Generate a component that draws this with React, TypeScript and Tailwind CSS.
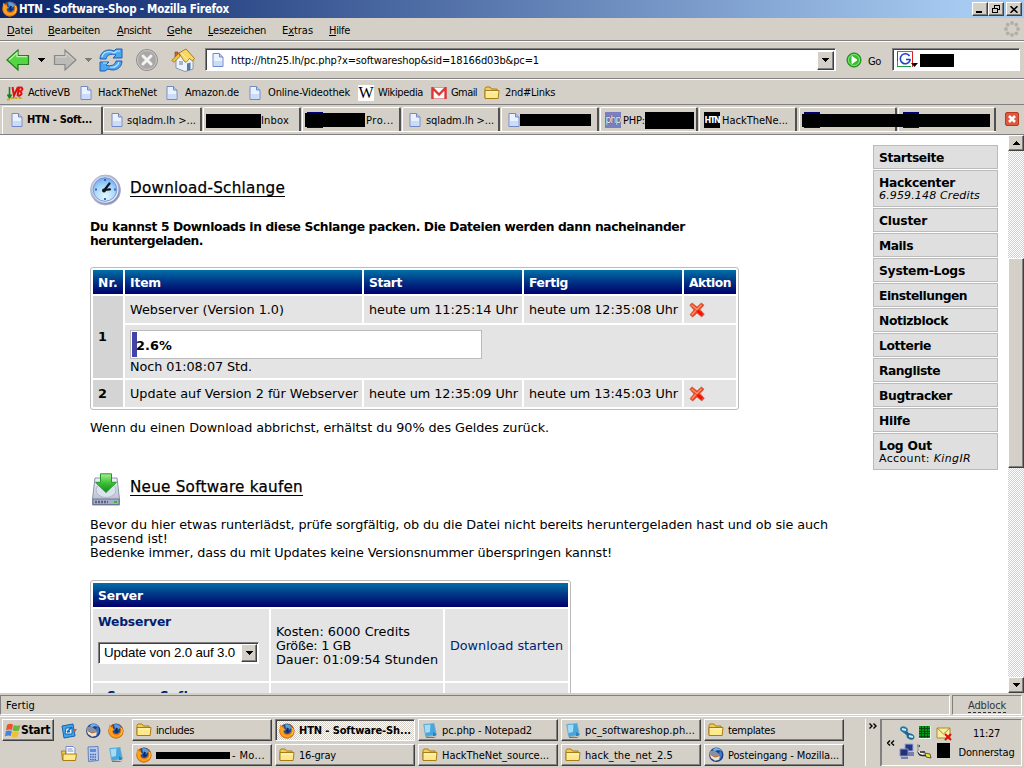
import { useLayoutEffect, useRef, type ReactNode } from "react";

/* Text set to a given advance width by spreading the letters evenly. */
function Fit({ w, line = false, className = "", children }: { w: number; line?: boolean; className?: string; children: ReactNode }) {
  const ref = useRef<HTMLSpanElement>(null);
  useLayoutEffect(() => {
    const el = ref.current;
    if (!el) return;
    el.style.letterSpacing = "0px";
    const natural = el.getBoundingClientRect().width;
    const count = (el.textContent || " ").length;
    el.style.letterSpacing = `${(w - natural) / count}px`;
  }, [w]);
  return (
    <span ref={ref} className={`${line ? "block w-max" : "inline-block"} shrink-0 whitespace-pre ${className}`}>
      {children}
    </span>
  );
}

const raised =
  "border border-t-white border-l-white border-r-[#404040] border-b-[#404040] bg-[#d4d0c8] shadow-[inset_-1px_-1px_#808080]";
const sunken =
  "border border-t-[#808080] border-l-[#808080] border-r-white border-b-white shadow-[inset_1px_1px_#404040]";
const checker = "bg-[repeating-conic-gradient(#ffffff_0%_25%,#d4d0c8_0%_50%)] bg-[length:2px_2px]";

function Firefox({ className = "size-4" }: { className?: string }) {
  return (
    <svg viewBox="0 0 16 16" className={`shrink-0 ${className}`}>
      <circle cx="8" cy="8" r="7.6" fill="#c8500c" />
      <circle cx="8" cy="7.2" r="6.4" fill="#1f4f9a" />
      <path d="M6 1.5c3-1 6 .3 7 3l-3 2-3-1z" fill="#5d9fd8" />
      <path d="M8 4.500l2 1-1 2 2 .5-2 2-2-1z" fill="#0d2a63" />
      <path d="M1.500 1.500L3 3.500l2-.6-.3 2L7 6.500 5 8c-.2 2 1.500 3.400 3.800 3 2.400-.4 3.600-2 3.600-4.200L11.600 3c3 1.600 4.200 4.600 3.200 7.500-1 3.200-4 5-7.200 4.900C3.500 15.200.5 12 .5 8c0-2.500.6-4.500 1-6.500z" fill="#e87a12" />
      <path d="M1.500 2L3 4.500l1.200 0L5.500 6.500 4 8c0 3 2.500 5 5.500 4.200 2.200-.6 4-2.400 4.200-5 1.200 4-1.800 7-5.700 7C4 14.200 1.200 11 1.200 7.500z" fill="#f9a51e" />
      <path d="M13.500 5c1 2 .8 5-1 7" stroke="#ffd94a" strokeWidth="1" fill="none" />
    </svg>
  );
}

function Thunderbird({ className = "size-4" }: { className?: string }) {
  return (
    <svg viewBox="0 0 16 16" className={`shrink-0 ${className}`}>
      <circle cx="8.300" cy="7.800" r="7.200" fill="#1d3f86" />
      <path d="M5 2c3-2 7-1 9 2-3-1-6-1-8 1z" fill="#6fb3ea" />
      <path d="M1 6c1-2 3-3 6-2l6 4-2 5-4 1-4-3z" fill="#8a8fa8" />
      <path d="M2 7l5 2.500L12.500 8l-1 4.500L7 13.500 3 11z" fill="#f0e3cc" />
      <path d="M2.500 7.500L7 10l5-1.500" stroke="#a5602a" fill="none" />
      <path d="M13 4c2 3 1 7-2 9 1-3 1-6 0-8z" fill="#3c7cc8" />
    </svg>
  );
}

function Page() {
  return (
    <svg viewBox="0 0 12 14" className="h-[14px] w-3 shrink-0">
      <path d="M1 .5h6.500l3.500 3.500v9.500H1z" fill="#eaf2ff" stroke="#7488c8" />
      <path d="M2 8h8v5H2z" fill="#c9dcfa" />
      <path d="M7.500.5V4H11" fill="#b8ccf2" stroke="#7488c8" />
    </svg>
  );
}

function Folder() {
  return (
    <svg viewBox="0 0 16 14" className="h-[14px] w-4 shrink-0">
      <path d="M1 2.500l1-1.500h4l1.500 2H13v2H4L2.500 12H1z" fill="#f2cf54" stroke="#a87d14" />
      <path d="M1 12.500V4.500h14l-.8 8z" fill="#ffe98c" stroke="#a87d14" />
      <path d="M2 6h12" stroke="#fff8d0" />
    </svg>
  );
}

function Notepad() {
  return (
    <svg viewBox="0 0 16 16" className="size-4 shrink-0">
      <path d="M4 14.500l9 .5 2-1-3 2H4z" fill="#777" />
      <path d="M1.500 2l10.500-1L14.500 13l-11 1.500z" fill="#49a6dc" stroke="#7fa8bd" strokeWidth=".6" />
      <path d="M2.500 3l6-.4L8 10l-4.500 1z" fill="#a4dcf8" />
      <path d="M1.500 1.500l10.500-1" stroke="#ddd" strokeWidth="1.500" strokeDasharray="1 1" />
      <path d="M11 10l3.500 2.500-1.500 1.500H11z" fill="#2a82bd" />
    </svg>
  );
}

function Down({ className = "" }: { className?: string }) {
  return (
    <svg viewBox="0 0 7 4" className={`h-1 w-[7px] ${className}`} shapeRendering="crispEdges">
      <path d="M0 0h7L3.500 4z" fill="#000" />
    </svg>
  );
}

function RedX() {
  return (
    <svg viewBox="0 0 16 16" className="mt-px size-4">
      <path d="M.8 3.200L3 .9 8 5l4.300-4 2.700 2.200-4 4.300 4.300 4.700-2.500 2.700L8 11l-4.300 4-2.700-2.300L5 8z" fill="#f2401c" stroke="#b9573d" strokeWidth=".7" />
      <path d="M2.500 3L8 7.500l4.500-4.800M2.800 13l4-4.500" stroke="#ff9064" strokeWidth="1.500" fill="none" />
      <path d="M8.500 8.800l4.500 4" stroke="#fb0b05" strokeWidth="2.500" />
    </svg>
  );
}

function TitleBar() {
  return (
    <div className="flex h-[18px] items-center bg-[linear-gradient(90deg,#0a246a,#a6caf0_94%)] pl-[2px] pr-[2px]">
      <Firefox />
      <Fit w={210} className="ml-px text-[11.500px] font-bold leading-[16px] text-white">HTN - Software-Shop - Mozilla Firefox</Fit>
      <div className="ml-auto flex">
        <div className={`flex h-[14px] w-4 items-end pb-[2px] pl-[3px] ${raised}`}><div className="h-[2px] w-[6px] bg-black" /></div>
        <div className={`flex h-[14px] w-4 items-center justify-center ${raised}`}>
          <svg viewBox="0 0 10 10" className="size-[10px]" shapeRendering="crispEdges" fill="none" stroke="#000">
            <path d="M3 1h6M3.500 1v3M8.500 1v5M7 5.500h2M1 4h6M1.500 4v5M6.500 4v5M1 8.500h6" /><path d="M3 1.500h6M1 4.500h6" />
          </svg>
        </div>
        <div className={`ml-[2px] flex h-[14px] w-4 items-center justify-center ${raised}`}>
          <svg viewBox="0 0 8 7" className="h-[7px] w-2" stroke="#000" strokeWidth="1.600"><path d="M.5.2l7 6.600M7.500.2l-7 6.600" /></svg>
        </div>
      </div>
    </div>
  );
}

const menus: [string, number, string, string, number][] = [
  ["", 26, "D", "atei", 15],
  ["", 52, "B", "earbeiten", 17],
  ["", 34, "A", "nsicht", 16],
  ["", 25, "G", "ehe", 16],
  ["", 58, "L", "esezeichen", 16],
  ["E", 31, "x", "tras", 16],
  ["", 21, "H", "ilfe", 0],
];

function Gap({ w }: { w: number }) {
  return <span className="shrink-0" style={{ width: w }} />;
}

function MenuBar() {
  return (
    <div className="flex h-6 items-start border-b border-b-white pl-[7px] pr-1 shadow-[inset_0_-1px_#808080]">
      {menus.map(([pre, w, u, post, gap]) => (
        <div key={u + post} className="flex shrink-0 pt-[6px]">
          <Fit w={w} className="leading-[14px]">{pre}<u>{u}</u>{post}</Fit>
          <Gap w={gap} />
        </div>
      ))}
      <svg viewBox="0 0 16 16" className="ml-auto mt-[3px] size-4" fill="#b2afaa">
        <circle cx="8" cy="2" r="1.900" /><circle cx="12.300" cy="3.700" r="1.900" /><circle cx="14" cy="8" r="1.900" /><circle cx="12.300" cy="12.300" r="1.900" />
        <circle cx="8" cy="14" r="1.900" /><circle cx="3.700" cy="12.300" r="1.900" /><circle cx="2" cy="8" r="1.900" /><circle cx="3.700" cy="3.700" r="1.900" />
      </svg>
    </div>
  );
}

function Toolbar() {
  return (
    <div className="flex h-[38px] items-center border-b border-b-white pb-[2px] shadow-[inset_0_-1px_#808080]">
      <svg viewBox="0 0 24 22" className="ml-[6px] h-[22px] w-6">
        <path d="M1 11L12 1v5.500h10.500v9H12V21z" fill="#56d544" stroke="#257d1f" strokeWidth="1.200" />
        <path d="M3 11l8-7.300v4h10" fill="none" stroke="#baf5a8" strokeWidth="1.300" />
      </svg>
      <Down className="ml-2 w-[6px]" />
      <svg viewBox="0 0 24 22" className="ml-[8px] h-[22px] w-6">
        <path d="M23 11L12 1v5.500H1.500v9H12V21z" fill="#bdbbb8" stroke="#898988" strokeWidth="1.200" />
        <path d="M3 8h10V4l8 7" fill="none" stroke="#d8d6d2" />
      </svg>
      <Down className="ml-2 w-[6px] opacity-40" />
      <svg viewBox="0 0 24 24" className="ml-[7px] size-6">
        <path d="M1 11C1 4 8 0 15 3l2-2h6v9h-9l3-3c-5-2-9 0-10 4z" fill="#4ca6ef" stroke="#1b61b4" />
        <path d="M23 13c0 7-7 11-14 8l-3 2H1v-9h9l-3 3c5 2 9 0 10-4z" fill="#4ca6ef" stroke="#1b61b4" />
        <path d="M3 9c1-5 7-7 12-4l3-2h3M4 15h4M20 14c-1 4-5 6-9 5" fill="none" stroke="#bde5ff" strokeWidth="1.200" />
      </svg>
      <svg viewBox="0 0 24 24" className="ml-3 size-6">
        <circle cx="12" cy="12" r="10.500" fill="#a9a8a6" stroke="#8d8c8b" />
        <circle cx="12" cy="12" r="9.500" fill="none" stroke="#c9c8c5" />
        <path d="M8 8l8 8M16 8l-8 8" stroke="#f4f3f0" strokeWidth="3" strokeLinecap="round" />
      </svg>
      <svg viewBox="0 0 24 24" className="ml-3 size-6">
        <path d="M5 10l6-6 11 8v9l-8 2.500L5 20z" fill="#eef3fb" stroke="#7a8494" strokeWidth=".8" />
        <path d="M4 4h3v6H4z" fill="#c95f35" stroke="#823f1d" strokeWidth=".6" />
        <path d="M8 5L.8 12.500l2.200 1.700L9 8.500z" fill="#f3c33f" stroke="#94640d" strokeWidth=".7" />
        <path d="M8 5l7-4 8.500 9.500-2 2.500-3-2.500-3.500 4-2-1.500z" fill="#fbd860" stroke="#94640d" strokeWidth=".8" />
        <path d="M10 5l7 7" stroke="#fff0a8" />
        <path d="M16 15.500l3.500-1v7.500L16 23z" fill="#587aa8" />
        <path d="M8 13h4v4H8z" fill="#9fb6d8" />
      </svg>
      <div className={`ml-[10px] flex h-[23px] w-[631px] shrink-0 items-center bg-white pl-[6px] pr-px ${sunken}`}>
        <Page />
        <Fit w={308} className="ml-[7px] mt-[3px] leading-[14px]">http://htn25.lh/pc.php?x=softwareshop&amp;sid=18166d03b&amp;pc=1</Fit>
        <div className={`ml-auto mt-px flex h-[19px] w-[17px] items-center justify-center ${raised}`}><Down /></div>
      </div>
      <svg viewBox="0 0 16 16" className="ml-[10px] mt-px size-4">
        <circle cx="8" cy="8" r="7" fill="#34bd2c" stroke="#16801a" />
        <circle cx="8" cy="8" r="5.500" fill="none" stroke="#8ee67c" />
        <path d="M6 4.500v7L11 8z" fill="#fff" stroke="#fff" />
      </svg>
      <Fit w={13} className="ml-[6px] mt-[4px] leading-[14px]">Go</Fit>
      <div className={`ml-[11px] flex h-[23px] w-[128px] shrink-0 items-center bg-white pl-1 ${sunken}`}>
        <svg viewBox="0 0 21 17" className="h-[17px] w-[21px] shrink-0">
          <path d="M.5 16V.5" stroke="#2aa64a" /><path d="M0 .5h16" stroke="#2aa64a" /><path d="M15.500 1v15" stroke="#e02020" /><path d="M0 15.500h14" stroke="#1b9d3a" /><path d="M.5 1v9" stroke="#2050d8" />
          <path d="M12.500 5A5 5 0 1 0 13 9.500V8.500H9" stroke="#1c46c4" strokeWidth="1.600" fill="none" />
          <path d="M14 12h7l-3.500 4z" fill="#000" />
        </svg>
        <div className="ml-[2px] mt-[2px] h-[13px] w-[34px] bg-black" />
      </div>
    </div>
  );
}

function Bookmarks() {
  return (
    <div className="flex h-[25px] items-center border-b border-[#808080] pl-[7px] pt-[2px]">
      <svg viewBox="0 0 17 15" className="h-[15px] w-[17px]">
        <path d="M2.500 1v9M.5 8.500l2 3.500 2-3.500" stroke="#188020" strokeWidth="1.600" fill="none" />
        <path d="M0 13.500h3l2-1.500h10" stroke="#c8b020" strokeWidth="1.800" fill="none" strokeDasharray="3 1" />
        <path d="M5.500 1l1.500 8.500L11 1M10.500 10l1.500-8.500h2.500q2.500 2-1.500 4 3.500 2-.5 4.200h-2" stroke="#e31010" strokeWidth="2" fill="none" />
      </svg>
      <Fit w={42} className="ml-[4px] leading-[14px]">ActiveVB</Fit>
      <Gap w={10} /><Page />
      <Fit w={59} className="ml-[6px] leading-[14px]">HackTheNet</Fit>
      <Gap w={9} /><Page />
      <Fit w={54} className="ml-[7px] leading-[14px]">Amazon.de</Fit>
      <Gap w={10} /><Page />
      <Fit w={82} className="ml-[7px] leading-[14px]">Online-Videothek</Fit>
      <span className="ml-2 flex h-4 w-4 items-center justify-center overflow-hidden bg-white font-['Liberation_Serif',serif] text-[16px] leading-4">W</span>
      <Fit w={45} className="ml-1 leading-[14px]">Wikipedia</Fit>
      <svg viewBox="0 0 16 12" className="ml-2 h-3 w-4">
        <path d="M.5.5h15v11H.5z" fill="#f9f9f9" stroke="#d99" /><path d="M1.500 12V1L8 7.500 14.500 1v11" fill="none" stroke="#dc3737" strokeWidth="2.300" />
      </svg>
      <Fit w={26} className="ml-1 leading-[14px]">Gmail</Fit>
      <Gap w={7} /><Folder />
      <Fit w={50} className="ml-[5px] leading-[14px]">2nd#Links</Fit>
    </div>
  );
}

function Tab({ className = "w-[98px] h-[24px]", children }: { className?: string; children?: ReactNode }) {
  return (
    <div className={`relative flex shrink-0 items-center rounded-t-[2px] border-l border-r-2 border-t border-l-white border-r-[#505050] border-t-white ${className}`}>
      {children}
    </div>
  );
}

function Tabs() {
  return (
    <div className="flex h-[30px] items-end border-b border-[#808080]">
      <Tab className="ml-[2px] h-[28px] w-[101px] pb-[2px] pl-[8px]">
        <Page /><Fit w={65} className="ml-[4px] mt-px font-bold leading-[14px]">HTN - Soft...</Fit>
      </Tab>
      <div className="mb-[2px] flex gap-px border-b border-white">
        <Tab className="h-[24px] w-[99px] pl-[7px]"><Page /><Fit w={69} className="ml-[4px] mt-[2px] leading-[14px]">sqladm.lh &gt;...</Fit></Tab>
        <Tab className="h-[24px] w-[98px] pl-[2px]"><div className="mt-[2px] h-[14px] w-[55px] bg-black" /><Fit w={28} className="mt-[2px] leading-[14px]">Inbox</Fit></Tab>
        <Tab className="h-[24px] w-[99px] pl-[2px]">
          <div className="mt-px flex h-4 w-[60px] items-center bg-[linear-gradient(#000080,#000080)] bg-[length:16px_16px] bg-[position:2px_0] bg-no-repeat"><div className="h-[14px] w-full bg-black" /></div>
          <Fit w={28} className="ml-px mt-[2px] leading-[14px]">Pro...</Fit>
        </Tab>
        <Tab className="h-[24px] w-[98px] pl-[6px]"><Page /><Fit w={68} className="ml-[5px] mt-[2px] leading-[14px]">sqladm.lh &gt;...</Fit></Tab>
        <Tab className="h-[24px] w-[98px] pl-[6px]"><Page /><div className="h-3 w-[71px] bg-black" /></Tab>
        <Tab className="h-[24px] w-[98px] pl-[4px]">
          <div className="mt-px flex size-4 items-center justify-center bg-[#7b7fc0] text-[10px] leading-4 text-white [text-shadow:0_0_1px_#000]"><Fit w={15}>php</Fit></div>
          <Fit w={22} className="ml-[2px] mt-[2px] leading-[14px]">PHP:</Fit><div className="mt-px h-[17px] w-[49px] shrink-0 bg-black" />
        </Tab>
        <Tab className="h-[24px] w-[98px] pl-[4px]">
          <div className="mt-px flex size-4 items-center justify-center bg-black text-[9px] font-bold leading-4 text-white"><Fit w={15}>HTN</Fit></div>
          <Fit w={66} className="ml-[2px] mt-[2px] leading-[14px]">HackTheNe...</Fit>
        </Tab>
        <Tab className="ml-px h-[24px] w-[98px] pl-[4px]">
          <div className="mt-px h-4 w-4 bg-[#000070]" />
          <div className="absolute left-[2px] top-[6px] z-10 h-[13px] w-[188px] bg-black" />
        </Tab>
        <Tab className="h-[24px] w-[98px] pl-[4px]"><div className="mt-px h-4 w-4 bg-[#000070]" /></Tab>
      </div>
      <svg viewBox="0 0 14 14" className="mb-[8px] ml-auto mr-[5px] size-[14px]">
        <rect x=".5" y=".5" width="13" height="13" rx="1.500" fill="#e2563d" stroke="#b83820" />
        <path d="M4 4l6 6M10 4l-6 6" stroke="#fff" strokeWidth="2.600" />
      </svg>
    </div>
  );
}

function Clock() {
  return (
    <svg viewBox="0 0 32 32" className="size-8 shrink-0">
      <defs>
        <radialGradient id="face" cx=".5" cy=".8" r=".8"><stop offset="0" stopColor="#e4f8ff" /><stop offset=".6" stopColor="#a5d6fa" /><stop offset="1" stopColor="#6eaaf0" /></radialGradient>
        <linearGradient id="rim" x2="1" y2="1"><stop offset="0" stopColor="#d8dff2" /><stop offset="1" stopColor="#7580a8" /></linearGradient>
      </defs>
      <circle cx="15.500" cy="16" r="15" fill="url(#rim)" stroke="#a3abc6" strokeWidth=".8" />
      <circle cx="15.500" cy="15.800" r="13" fill="#e6eaf6" />
      <circle cx="15" cy="15.500" r="11.800" fill="url(#face)" stroke="#6684c4" strokeWidth=".8" />
      <path d="M15 5v2M15 24v2M5 15.500h2M24 15.500h2" stroke="#3f64c8" strokeWidth="2" />
      <path d="M14 16.500l5.500-7M14 16l6-.6" stroke="#101820" strokeWidth="2.200" strokeLinecap="round" />
      <circle cx="14" cy="16.500" r="2" fill="#101820" />
    </svg>
  );
}

function Drive() {
  return (
    <svg viewBox="0 0 28 34" className="h-[34px] w-7 shrink-0">
      <defs>
        <linearGradient id="disk" y2="1" x2="0"><stop offset="0" stopColor="#eef1f7" /><stop offset="1" stopColor="#aeb6cb" /></linearGradient>
        <linearGradient id="arrow" y2="1" x2="0"><stop offset="0" stopColor="#a6ef92" /><stop offset=".5" stopColor="#3cbf35" /><stop offset="1" stopColor="#0b8b18" /></linearGradient>
      </defs>
      <path d="M3 5h22l2.500 21v6H.5v-6z" fill="url(#disk)" stroke="#8a93a9" />
      <ellipse cx="14" cy="17" rx="10" ry="7.500" fill="#dbe1ee" stroke="#b1bacd" />
      <path d="M1 26h26v5.500H1z" fill="#a6afc4" stroke="#6d7690" />
      <path d="M3 29h13" stroke="#596582" strokeWidth="2.500" strokeDasharray="2 1" /><path d="M22 29h3" stroke="#2dbd35" strokeWidth="2" />
      <path d="M8.500.8h11v8.500h5L14 19.500 3.500 9.300h5z" fill="url(#arrow)" stroke="#21992a" />
    </svg>
  );
}

const hd = "flex items-center bg-[linear-gradient(#0070a8,#003888_45%,#00006c)] pl-[5px] pt-px text-[12.300px] font-bold text-white";
const td = "flex items-center bg-[#e4e4e4] pl-[5px]";

function QueueTable() {
  return (
    <div className="mt-[19px] grid h-[143px] w-[649px] grid-cols-[30px_237px_158px_158px_52px] grid-rows-[24px_27px_53px_27px] gap-[2px] rounded-[3px] border border-[#bbb] p-[2px]">
      <div className={hd}><Fit w={20}>Nr.</Fit></div>
      <div className={hd}><Fit w={31}>Item</Fit></div>
      <div className={hd}><Fit w={33}>Start</Fit></div>
      <div className={hd}><Fit w={39}>Fertig</Fit></div>
      <div className={hd}><Fit w={42}>Aktion</Fit></div>
      <div className="row-span-2 flex items-center bg-[#d4d4d4] pl-[5px] font-bold">1</div>
      <div className={td}><Fit w={154}>Webserver (Version 1.0)</Fit></div>
      <div className={td}><Fit w={149}>heute um 11:25:14 Uhr</Fit></div>
      <div className={td}><Fit w={149}>heute um 12:35:08 Uhr</Fit></div>
      <div className={td}><RedX /></div>
      <div className="col-span-4 bg-[#e4e4e4] pl-[5px] pt-[5px]">
        <div className="relative flex h-[29px] w-[352px] items-center border border-[#bbb] bg-white pl-[5px] font-bold">
          <div className="absolute bottom-px left-px top-px w-[5px] bg-[#4343aa]" />
          <Fit w={36} className="relative mt-[2px]">2.6%</Fit>
        </div>
        <Fit w={122} line className="mt-px">Noch 01:08:07 Std.</Fit>
      </div>
      <div className="flex items-center bg-[#d4d4d4] pl-[5px] font-bold">2</div>
      <div className={td}><Fit w={228}>Update auf Version 2 für Webserver</Fit></div>
      <div className={td}><Fit w={149}>heute um 12:35:09 Uhr</Fit></div>
      <div className={td}><Fit w={149}>heute um 13:45:03 Uhr</Fit></div>
      <div className={td}><RedX /></div>
    </div>
  );
}

function ShopTable() {
  return (
    <div className="mt-[20px] grid w-[481px] grid-cols-[176px_172px_123px] grid-rows-[24px_72px_72px] gap-[2px] rounded-[3px] border border-[#bbb] p-[2px]">
      <div className={`col-span-3 ${hd}`}><Fit w={45}>Server</Fit></div>
      <div className="bg-[#e4e4e4] pl-[5px] pt-[6px]">
        <Fit w={73} line className="text-[12.300px] font-bold text-[#001f71]">Webserver</Fit>
        <div className={`mt-[13px] flex h-[22px] w-[161px] items-center bg-white pl-[5px] pr-px font-['Liberation_Sans',sans-serif] text-[13.300px] ${sunken}`}>
          <Fit w={131}>Update von 2.0 auf 3.0</Fit>
          <div className={`ml-auto flex h-[18px] w-4 items-center justify-center ${raised}`}><Down /></div>
        </div>
      </div>
      <div className={`${td} pt-[2px]`}>
        <div>
          <Fit w={134} line>Kosten: 6000 Credits</Fit>
          <Fit w={75} line>Größe: 1 GB</Fit>
          <Fit w={162} line>Dauer: 01:09:54 Stunden</Fit>
        </div>
      </div>
      <div className={`${td} pt-[2px] text-[#001f71]`}><Fit w={113}>Download starten</Fit></div>
      <div className="bg-[#e4e4e4] pl-[14px] pt-[6px]"><Fit w={118} line className="text-[12.300px] font-bold text-[#001f71]">Server-Software</Fit></div>
      <div className={td} />
      <div className={td} />
    </div>
  );
}

const nav: [string, number][] = [
  ["Startseite", 65], ["Hackcenter", 76], ["Cluster", 48], ["Mails", 34], ["System-Logs", 86], ["Einstellungen", 88],
  ["Notizblock", 69], ["Lotterie", 52], ["Rangliste", 61], ["Bugtracker", 73], ["Hilfe", 31], ["Log Out", 53],
];

function Sidebar() {
  return (
    <nav className="mt-[10px] flex w-[125px] shrink-0 flex-col gap-px">
      {nav.map(([label, w]) => (
        <div key={label} className={`border border-[#bbb] bg-[#dfdfdf] pl-[5px] pt-[5px] ${label === "Hackcenter" || label === "Log Out" ? "h-[37px]" : "h-6"}`}>
          <Fit w={w} line className="text-[12.300px] font-bold leading-[14px]">{label}</Fit>
          {label === "Hackcenter" && <Fit w={101} line className="text-[11px] italic leading-[12px]">6.959.148 Credits</Fit>}
          {label === "Log Out" && <Fit w={92} line className="text-[11px] leading-[12px]">Account: <i>KingIR</i></Fit>}
        </div>
      ))}
    </nav>
  );
}

function Scrollbar() {
  return (
    <div className={`ml-[10px] flex w-4 shrink-0 flex-col ${checker}`}>
      <div className={`flex h-4 items-center justify-center ${raised}`}><Down className="rotate-180" /></div>
      <div className={`mt-[107px] h-[210px] ${raised}`} />
      <div className={`mt-auto flex h-4 items-center justify-center ${raised}`}><Down /></div>
    </div>
  );
}

function Content() {
  return (
    <div className="flex h-[558px] overflow-hidden bg-white font-['DejaVu_Sans',sans-serif] text-[12.800px] leading-[14px] text-black">
      <main className="w-[873px] shrink-0 pl-[90px] pt-[39px]">
        <h1 className="flex h-8 items-start gap-[8px] text-[15.200px]">
          <Clock /><Fit w={155} className="mt-[7px] border-b border-black leading-[15px] [-webkit-text-stroke:0.25px_#000]">Download-Schlange</Fit>
        </h1>
        <div className="mt-[14px] text-[12.300px] font-bold">
          <Fit w={595} line>Du kannst 5 Downloads in diese Schlange packen. Die Dateien werden dann nacheinander</Fit>
          <Fit w={113} line>heruntergeladen.</Fit>
        </div>
        <QueueTable />
        <Fit w={459} line className="mt-[11px]">Wenn du einen Download abbrichst, erhältst du 90% des Geldes zurück.</Fit>
        <h1 className="mt-[38px] flex h-[34px] items-start pl-[2px] text-[15.200px]">
          <Drive /><Fit w={173} className="ml-[10px] mt-[7px] border-b border-black leading-[15px] [-webkit-text-stroke:0.25px_#000]">Neue Software kaufen</Fit>
        </h1>
        <div className="mt-[11px]">
          <Fit w={738} line>Bevor du hier etwas runterlädst, prüfe sorgfältig, ob du die Datei nicht bereits heruntergeladen hast und ob sie auch</Fit>
          <Fit w={78} line>passend ist!</Fit>
          <Fit w={522} line>Bedenke immer, dass du mit Updates keine Versionsnummer überspringen kannst!</Fit>
        </div>
        <ShopTable />
      </main>
      <Sidebar />
      <Scrollbar />
    </div>
  );
}

function StatusBar() {
  return (
    <div className="flex h-6 gap-[2px] border-b border-white pb-[1px] pr-[2px] pt-[2px] leading-[14px]">
      <div className="flex w-[950px] items-center border border-b-white border-l-[#808080] border-r-white border-t-[#808080] pl-[5px] pt-px"><Fit w={29}>Fertig</Fit></div>
      <div className="flex flex-1 items-center justify-center border border-b-white border-l-[#808080] border-r-white border-t-[#808080] pt-px">
        <Fit w={38} className="border-b border-dashed border-[#333] leading-[13px] text-[#333]">Adblock</Fit>
      </div>
    </div>
  );
}

function Task({ icon, w, children, active = false }: { icon: ReactNode; w: number; children: ReactNode; active?: boolean }) {
  return (
    <div className={`flex h-[22px] items-center gap-1 pl-[3px] ${active ? `${sunken} ${checker} pt-px font-bold` : raised}`}>
      {icon}<Fit w={w} className="mt-px leading-[14px]">{children}</Fit>
    </div>
  );
}

function Taskbar() {
  return (
    <div className="flex h-[51px] items-start border-t border-[#d4d0c8] pl-[2px] pt-px leading-[14px]">
      <div className={`flex h-[22px] w-[52px] items-center pl-[2px] ${raised}`}>
        <svg viewBox="0 0 16 16" className="size-4 shrink-0">
          <path d="M2 3q3-2 6-.5L7 8Q4 7 1 8.500z" fill="#ea542b" /><path d="M8.700 3Q12 4.500 15.500 3L14 8.500q-3 1.500-6.500 0z" fill="#6cb541" />
          <path d="M.8 9.300Q4 8 6.800 9l-1 5Q3 13 0 14.500z" fill="#4384dd" /><path d="M7.500 9.500q3 1 6.300 0L12.500 15q-3 1-6 0z" fill="#f4bf2e" />
        </svg>
        <Fit w={29} className="text-[12px] font-bold">Start</Fit>
      </div>
      <div className="ml-[7px] grid w-[64px] grid-cols-[24px_23px_17px] grid-rows-[23px_23px] pt-[4px]">
        <svg viewBox="0 0 16 16" className="size-4">
          <path d="M1 3l11-2 2 12-11 2z" fill="#41a7ed" stroke="#1763ac" /><path d="M5 5h6v6H4z" fill="#e8f6ff" stroke="#1763ac" /><path d="M6 9l5-5M6 9l3-.5" stroke="#1763ac" strokeWidth="1.500" /><path d="M12 6l4 0-2 3z" fill="#e6502f" />
        </svg>
        <Thunderbird /><Firefox />
        <svg viewBox="0 0 16 16" className="size-4"><path d="M.5 5h4v9h-3z" fill="#f2cf54" stroke="#a87d14" /><path d="M5 .5h7l2 2V10H5z" fill="#fff" stroke="#6c8cc8" /><path d="M6.500 3h5M6.500 5h6" stroke="#88b" /><path d="M2 8h13.500l-1 6.500H2z" fill="#ffe98c" stroke="#a87d14" /></svg>
        <svg viewBox="0 0 16 16" className="size-4"><path d="M3 1l10-.5.5 14-10 1z" fill="#b7ccf0" stroke="#6480b8" /><path d="M5 3h6v3H5z" fill="#5b8de0" /><path d="M5 8.500h6M5 11h6M5 13.500h6" stroke="#4668b0" strokeWidth="1.500" strokeDasharray="1.500 .8" /></svg>
        <Notepad />
      </div>
      <div className="ml-[7px] grid w-[712px] grid-cols-[140px_140px_140px_140px_140px] gap-x-[3px] gap-y-[3px]">
        <Task icon={<Folder />} w={38}>includes</Task>
        <Task icon={<Firefox />} w={112} active>HTN - Software-Sh...</Task>
        <Task icon={<Notepad />} w={90}>pc.php - Notepad2</Task>
        <Task icon={<Notepad />} w={110}>pc_softwareshop.ph...</Task>
        <Task icon={<Folder />} w={47}>templates</Task>
        <div className={`flex h-[22px] items-center pl-[3px] ${raised}`}>
          <Firefox /><div className="ml-[4px] mt-px h-[7px] w-[74px] bg-black" /><Fit w={33} className="ml-[2px] mt-px leading-[14px]">- Mo...</Fit>
        </div>
        <Task icon={<Folder />} w={37}>16-gray</Task>
        <Task icon={<Folder />} w={107}>HackTheNet_source...</Task>
        <Task icon={<Folder />} w={88}>hack_the_net_2.5</Task>
        <Task icon={<Thunderbird />} w={111}>Posteingang - Mozilla...</Task>
      </div>
      <div className="ml-[21px] flex h-[47px] w-4 shrink-0 justify-center border-l border-r border-l-white border-r-[#808080] pt-[4px]">
        <svg viewBox="0 0 8 6" className="h-[6px] w-2" fill="none" stroke="#000" strokeWidth="1.400"><path d="M.5.5L3 3 .5 5.500M4.500.5L7 3 4.500 5.500" /></svg>
      </div>
      <div className="flex h-[47px] w-[141px] shrink-0 items-center border border-b-white border-l-[#808080] border-r-white border-t-[#808080] pl-[5px]">
        <svg viewBox="0 0 8 6" className="h-[6px] w-2 shrink-0" fill="none" stroke="#000" strokeWidth="1.400"><path d="M3 .5L.5 3 3 5.500M7 .5L4.500 3 7 5.500" /></svg>
        <div className="ml-[4px] grid grid-cols-[20px_19px_16px] grid-rows-[18px_18px]">
          <svg viewBox="0 0 16 16" className="size-4"><path d="M4 5l8 7" stroke="#235f92" strokeWidth="3" /><ellipse cx="5" cy="4.500" rx="4" ry="3" fill="#28739e" transform="rotate(25 5 4.500)" /><ellipse cx="11.500" cy="11.500" rx="4" ry="3" fill="#226994" transform="rotate(25 11.500 11.500)" /><path d="M3 4l4 1M10 11l4 1" stroke="#bdf3ff" strokeWidth="2" /></svg>
          <svg viewBox="0 0 12 14" className="mt-px h-[13px] w-3" shapeRendering="crispEdges"><path d="M0 0h12v14H0z" fill="#009b14" /><path d="M0 2.500h12M0 5.500h12M0 8.500h12M0 11.500h12M2.500 0v14M5.500 0v14M8.500 0v14" stroke="#004c08" /><path d="M11.500 0v13.500H0" fill="none" stroke="#fff" /></svg>
          <svg viewBox="0 0 16 16" className="-ml-[2px] size-4"><path d="M1 3h13v10H1z" fill="#f8eda5" stroke="#a98b21" /><path d="M1 3l6.500 6L14 3" fill="none" stroke="#a98b21" /><path d="M9 9l6 6M15 9l-6 6" stroke="#e30c0c" strokeWidth="2" /></svg>
          <svg viewBox="0 0 16 16" className="size-4"><path d="M6 1h8v7H6z" fill="#263680" stroke="#9cabdf" /><path d="M1 6h8v7H1z" fill="#243274" stroke="#8190ce" /><path d="M10 10h4v2h-4zM2 15h7" stroke="#7380b2" strokeWidth="2" /></svg>
          <svg viewBox="0 0 16 16" className="-ml-[3px] size-4"><path d="M2 1v7q0 5 6 4.500h2M1 3h3M4 9h5" fill="none" stroke="#222" strokeWidth="1.300" /><path d="M2 1v7q1 3 5 3" fill="none" stroke="#fff" /><path d="M9 10l5 1 1 4-5-1z" fill="#eee52c" stroke="#333" strokeWidth=".8" /></svg>
          <div className="-ml-px h-[15px] w-[13px] bg-black" />
        </div>
        <div className="ml-[4px] flex w-[57px] flex-col items-center gap-[5px] pt-px"><Fit w={27}>11:27</Fit><Fit w={56}>Donnerstag</Fit></div>
      </div>
    </div>
  );
}

export default function App() {
  return (
    <div className="flex h-[768px] w-[1024px] flex-col overflow-hidden bg-[#d4d0c8] font-['DejaVu_Sans_Condensed','DejaVu_Sans',sans-serif] text-[11px] text-black">
      <TitleBar />
      <MenuBar />
      <Toolbar />
      <Bookmarks />
      <Tabs />
      <Content />
      <StatusBar />
      <Taskbar />
    </div>
  );
}
